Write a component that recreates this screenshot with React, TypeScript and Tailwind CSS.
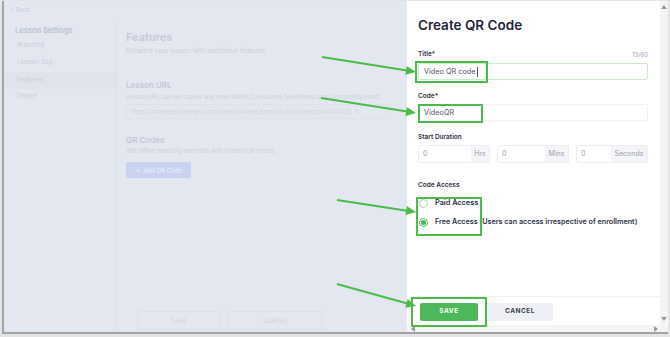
import React from "react";

const GREEN = "#4cbb4a";

const ARROWS: [number, number, number, number][] = [
  [322, 57, 416, 72],
  [321, 98, 416, 113],
  [337, 200, 416, 212],
  [337, 284, 416, 306],
];

const BOXES: [number, number, number, number][] = [
  [416, 62, 71, 20],
  [419, 105, 63, 17],
  [417, 198, 64, 37],
  [412, 298, 74, 28],
];

function Arrow({ a }: { a: [number, number, number, number] }) {
  const [x1, y1, x2, y2] = a;
  const dx = x2 - x1;
  const dy = y2 - y1;
  const L = Math.hypot(dx, dy);
  const ux = dx / L;
  const uy = dy / L;
  const hl = 10;
  const hw = 4.5;
  const bx = x2 - ux * hl;
  const by = y2 - uy * hl;
  const px = -uy * hw;
  const py = ux * hw;
  return (
    <g>
      <line x1={x1} y1={y1} x2={bx + ux} y2={by + uy} stroke={GREEN} strokeWidth={2} />
      <polygon
        points={`${x2},${y2} ${bx + px},${by + py} ${bx - px},${by - py}`}
        fill={GREEN}
      />
    </g>
  );
}

function Overlay() {
  return (
    <svg className="absolute left-0 top-0 pointer-events-none" width={670} height={337}>
      {ARROWS.map((a, i) => (
        <Arrow key={i} a={a} />
      ))}
      {BOXES.map(([x, y, w, h], i) => (
        <rect key={i} x={x} y={y} width={w} height={h} fill="none" stroke={GREEN} strokeWidth={2} />
      ))}
    </svg>
  );
}

function LeftSide() {
  return (
    <div className="w-[403px] h-full bg-[#e3e7f0] flex flex-col">
      <div className="h-[18px] pl-[6px] pt-[5px] text-[6px] leading-[8px] text-[#c9ced9]">&lt; Back</div>
      <div className="flex flex-1 min-h-0">
        <div className="w-[113px] border-r border-[#dde1ea] flex flex-col">
          <div className="pl-[11px] mt-[7px] text-[7.5px] leading-[10px] font-semibold text-[#bcc2ce]">
            Lesson Settings
          </div>
          <div className="pl-[13px] mt-[5px] text-[6.5px] leading-[9px] text-[#ccd1dc]">Branding</div>
          <div className="pl-[13px] mt-[8px] text-[6.5px] leading-[9px] text-[#ccd1dc]">Lesson Tag</div>
          <div className="pl-[13px] mt-[5px] py-[4px] bg-[#dfe3ec] text-[6.5px] leading-[9px] text-[#ccd1dc]">
            Features
          </div>
          <div className="pl-[13px] mt-[3px] text-[6.5px] leading-[9px] text-[#ccd1dc]">Delete</div>
        </div>
        <div className="flex-1 pl-[9px] flex flex-col">
          <div className="mt-[11px] text-[11px] leading-[14px] font-semibold text-[#c6cbd6]">Features</div>
          <div className="mt-[3px] text-[6.6px] leading-[8px] text-[#cdd2dc]">
            Enhance your lesson with additional features
          </div>
          <div className="mt-[25px] text-[8px] leading-[10px] font-semibold text-[#c3c8d4]">Lesson URL</div>
          <div className="mt-[3px] text-[6px] leading-[8px] text-[#cdd2dc] whitespace-nowrap">
            Lesson URL can be copied and used within Curriculum, Newsfeeds and Community posts.
          </div>
          <div className="mt-[3px] w-[264px] h-[15px] border border-[#dde1ea] pl-[4px] text-[6.2px] leading-[13px] text-[#d2d7e0] whitespace-nowrap overflow-hidden">
            https://satheesh.learnyst.com/learn/home/Learnysttutorial/section/464525, %
          </div>
          <div className="mt-[16px] text-[8px] leading-[10px] font-semibold text-[#c3c8d4]">QR Codes</div>
          <div className="mt-[2px] text-[6px] leading-[8px] text-[#cdd2dc]">
            Sell offline teaching materials with printed QR codes.
          </div>
          <div className="mt-[7px] w-[65px] h-[16px] rounded-[2px] bg-[#c9d3f0] flex items-center justify-center gap-[3px] text-[6px] font-semibold text-[#e3e8f8]">
            <span className="text-[8px] leading-[8px]">+</span>
            <span>Add QR Code</span>
          </div>
          <div className="mt-auto mb-[2px] ml-[11px] flex gap-[7px]">
            <div className="w-[84px] h-[19px] border border-[#dde1ea] flex items-center justify-center text-[6px] font-semibold text-[#d6dae3]">
              SAVE
            </div>
            <div className="w-[94px] h-[19px] border border-[#dde1ea] flex items-center justify-center text-[6px] font-semibold text-[#d6dae3]">
              CANCEL
            </div>
          </div>
        </div>
      </div>
    </div>
  );
}

function Label({ children, className = "" }: { children: React.ReactNode; className?: string }) {
  return (
    <div className={"text-[6.5px] leading-[9px] font-semibold text-[#2c3147] " + className}>{children}</div>
  );
}

function Duration({ suffix, sw }: { suffix: string; sw: string }) {
  return (
    <div className="flex h-[18px] border border-[#eceef2] rounded-[2px]">
      <div className="flex-1 pl-[4px] text-[7px] leading-[16px] text-[#9aa0ad]">0</div>
      <div className={"bg-[#f4f5f8] text-[7px] leading-[16px] text-[#9aa0ad] text-center " + sw}>{suffix}</div>
    </div>
  );
}

function RightPanel() {
  return (
    <div className="flex-1 h-full bg-white flex flex-col">
      <div className="flex flex-1 min-h-0">
        <div className="flex-1 flex flex-col pl-[11px] pr-[12px]">
          <div className="mt-[15px] text-[13.5px] leading-[18px] font-semibold text-[#1f2537]">Create QR Code</div>
          <div className="mt-[16px] flex justify-between">
            <Label>Title*</Label>
            <div className="text-[6px] leading-[9px] text-[#a2a7b2]">13/60</div>
          </div>
          <div className="mt-[4px] h-[17px] border border-[#c6ecc6] rounded-[2px] pl-[5px] text-[7.3px] leading-[15px] text-[#535a6b] flex items-center">
            Video QR code<span className="inline-block w-px h-[10px] bg-[#555] ml-[1px]" />
          </div>
          <Label className="mt-[12px]">Code*</Label>
          <div className="mt-[3px] h-[17px] border border-[#eef0f3] rounded-[2px] pl-[5px] text-[7.3px] leading-[15px] text-[#535a6b]">
            VideoQR
          </div>
          <Label className="mt-[12px]">Start Duration</Label>
          <div className="mt-[3px] grid grid-cols-3 gap-[7px]">
            <Duration suffix="Hrs" sw="w-[18px]" />
            <Duration suffix="Mins" sw="w-[23px]" />
            <Duration suffix="Seconds" sw="w-[36px]" />
          </div>
          <Label className="mt-[18px]">Code Access</Label>
          <div className="mt-[8px] flex items-center h-[10px]">
            <div className="ml-[1px] w-[9px] h-[9px] rounded-full border border-[#9fd69f]" />
            <div className="ml-[7px] text-[7.3px] leading-[10px] font-semibold text-[#2c3147]">Paid Access</div>
          </div>
          <div className="mt-[9px] flex items-center h-[10px]">
            <div className="ml-[1px] w-[9px] h-[9px] rounded-full border border-[#4cb85a] flex items-center justify-center">
              <div className="w-[5px] h-[5px] rounded-full bg-[#4cb85a]" />
            </div>
            <div className="ml-[7px] text-[7.2px] leading-[10px] font-semibold text-[#2c3147] whitespace-nowrap">
              Free Access (Users can access irrespective of enrollment)
            </div>
          </div>
          <div className="mt-auto -ml-[11px] -mr-[12px] h-[29px] border-t border-[#f0f1f4] pl-[13px] pt-[6px] flex gap-[9px]">
            <div className="w-[58px] h-[18px] rounded-[2px] bg-[#4db85a] flex items-center justify-center text-[6.5px] font-bold tracking-[0.5px] text-white">
              SAVE
            </div>
            <div className="w-[66px] h-[18px] rounded-[2px] bg-[#eef0f5] flex items-center justify-center text-[6.5px] font-bold tracking-[0.5px] text-[#3a3f52]">
              CANCEL
            </div>
          </div>
        </div>
        <div className="w-[8px] h-full bg-[#f4f4f4] flex flex-col items-center justify-between py-[4px]">
          <svg width="6" height="4" viewBox="0 0 6 4">
            <polygon points="3,0 6,4 0,4" fill="#9a9a9a" />
          </svg>
          <svg width="6" height="4" viewBox="0 0 6 4">
            <polygon points="0,0 6,0 3,4" fill="#9a9a9a" />
          </svg>
        </div>
      </div>
      <div className="h-[7px] bg-[#f4f4f4] flex items-center justify-between pl-[4px] pr-[10px]">
        <svg width="4" height="6" viewBox="0 0 4 6">
          <polygon points="4,0 4,6 0,3" fill="#9a9a9a" />
        </svg>
        <svg width="4" height="6" viewBox="0 0 4 6">
          <polygon points="0,0 0,6 4,3" fill="#9a9a9a" />
        </svg>
      </div>
    </div>
  );
}

export default function App() {
  return (
    <div
      className="relative w-[670px] h-[337px] bg-[#e4e4e4] pl-[2px] pr-[2px] pt-[1px] pb-[3px] overflow-hidden"
      style={{ fontFamily: "Inter, 'Noto Sans', sans-serif" }}
    >
      <div className="w-full h-full border-l-2 border-b-2 border-[#a3a3a3] flex">
        <LeftSide />
        <RightPanel />
      </div>
      <Overlay />
    </div>
  );
}
